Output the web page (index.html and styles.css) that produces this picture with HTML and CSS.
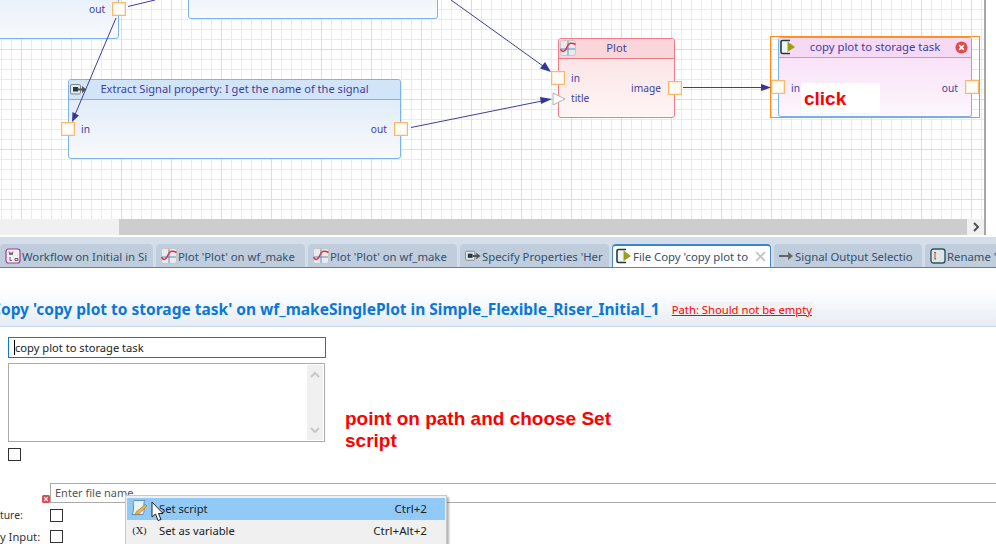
FILE: index.html
```html
<!DOCTYPE html>
<html lang="en">
<head>
<meta charset="utf-8">
<title>File Copy task</title>
<link rel="stylesheet" href="styles.css">
</head>
<body>
<svg class="defs" width="0" height="0" aria-hidden="true">
  <symbol id="i-plot" viewBox="0 0 16 16">
    <rect x="0.500" y="0.500" width="15" height="15" rx="2" fill="#e8ebee" stroke="#c3c7ca"/>
    <path d="M8 1V15M1 9H15" stroke="#5a8fc0" stroke-width="1"/>
    <path d="M0.500 9C3 13.500 5.500 11 7 7C8.500 3 11.500 2 15.500 4.500" fill="none" stroke="#e0303c" stroke-width="1.500"/>
  </symbol>
  <symbol id="i-copy" viewBox="0 0 16 16">
    <path d="M10 1.500H2.500A1.500 1.500 0 0 0 1 3V13A1.500 1.500 0 0 0 2.500 14.500H10" fill="#f4f6f4" stroke="#1f3f42" stroke-width="1.600"/>
    <path d="M7.500 2.500L15 8L7.500 13Z" fill="#9aa016"/>
  </symbol>
  <symbol id="i-extract" viewBox="0 0 17 13">
    <rect x="0.500" y="1.500" width="10" height="9.500" rx="1.500" fill="#e6e8ea" stroke="#7c8588"/>
    <rect x="3" y="4" width="5" height="4.500" fill="#1f3d45"/>
    <path d="M8 5.500H12V3L16.500 6.500L12 10V7.500H8Z" fill="#555"/>
  </symbol>
  <symbol id="i-err" viewBox="0 0 14 14">
    <circle cx="7" cy="7" r="6.500" fill="#e04a4a"/>
    <path d="M4.500 4.500L9.500 9.500M9.500 4.500L4.500 9.500" stroke="#fff" stroke-width="1.800"/>
  </symbol>
</svg>

<main class="app">
  <section class="diagram">
    <div class="canvas">
      <div class="node node-blue node-a"></div>
      <div class="node node-blue node-b"></div>

      <div class="node node-blue node-extract">
        <div class="node-head"><svg class="node-icon extract-icon"><use href="#i-extract"/></svg><span class="node-title">Extract Signal property: I get the name of the signal</span></div>
        <div class="node-body"><span class="plabel extract-in">in</span><span class="plabel extract-out">out</span></div>
      </div>

      <div class="node node-red node-plot">
        <div class="node-head"><svg class="node-icon plot-icon"><use href="#i-plot"/></svg><span class="node-title">Plot</span></div>
        <div class="node-body"><span class="plabel plot-in">in</span><span class="plabel plot-title">title</span><span class="plabel plot-image">image</span></div>
      </div>

      <div class="selection"></div>
      <div class="node node-pink node-copy">
        <div class="node-head"><svg class="node-icon copy-icon"><use href="#i-copy"/></svg><span class="node-title copy-title">copy plot to storage task</span><svg class="node-err"><use href="#i-err"/></svg></div>
        <div class="node-body"><span class="plabel copy-in">in</span><span class="plabel copy-out">out</span><span class="click-note">click</span></div>
      </div>

      <span class="plabel top-out">out</span>
      <span class="port p-top"></span>
      <span class="port p-ein"></span>
      <span class="port p-eout"></span>
      <span class="port p-pin"></span>
      <svg class="tri" viewBox="0 0 14 14"><path d="M1 1L13 7L1 13Z" fill="#fdfdfb" stroke="#b0b0b0"/></svg>
      <span class="port p-pimg"></span>
      <span class="port p-cin"></span>
      <span class="port p-cout"></span>

      <svg class="wires" width="986" height="219" viewBox="0 0 986 219">
        <g stroke="#3d3d9c" stroke-width="1" fill="none">
          <path d="M128 6.500L155 0"/>
          <path d="M116 18L74 117"/>
          <path d="M451 0L543 66"/>
          <path d="M411 127.500L542 101"/>
          <path d="M683 87.500H762"/>
        </g>
        <g fill="#35359a">
          <path d="M72 122L72.500 112L79 115.500Z"/>
          <path d="M551 72L540 68.500L545 62Z"/>
          <path d="M552 99L541 104L540 97Z"/>
          <path d="M771 87.500L761 84V91Z"/>
        </g>
      </svg>
    </div>
    <div class="hscroll">
      <div class="hscroll-gap"></div>
      <div class="hscroll-thumb"></div>
      <div class="hscroll-btn"><svg width="8" height="10" viewBox="0 0 8 10"><path d="M2 1L6 5L2 9" fill="none" stroke="#505050" stroke-width="2"/></svg></div>
    </div>
  </section>

  <nav class="tabbar">
    <div class="tab tab-1"><svg class="tab-icon" viewBox="0 0 16 16"><rect x="1" y="1" width="14" height="14" rx="2.500" fill="#f6eef6" stroke="#a03c96" stroke-width="1.200"/><path d="M4 3.500L5 7L6 4.500L7 7L8 3.500M5 9V12.500H7M10 10.500H13V12.500H10Z" fill="none" stroke="#555" stroke-width=".9"/></svg><span>Workflow on Initial in Si</span></div>
    <div class="tab tab-2"><svg class="tab-icon"><use href="#i-plot"/></svg><span>Plot 'Plot' on wf_make</span></div>
    <div class="tab tab-3"><svg class="tab-icon"><use href="#i-plot"/></svg><span>Plot 'Plot' on wf_make</span></div>
    <div class="tab tab-4"><svg class="tab-icon" viewBox="0 0 17 13"><use href="#i-extract"/></svg><span>Specify Properties 'Her</span></div>
    <div class="tab tab-active"><svg class="tab-icon"><use href="#i-copy"/></svg><span>File Copy 'copy plot to</span><svg class="tab-close" viewBox="0 0 10 10"><path d="M1 1L9 9M9 1L1 9" stroke="#c4c8cc" stroke-width="1.800"/></svg></div>
    <div class="tab tab-6"><svg class="tab-icon" viewBox="0 0 16 16"><path d="M1 7H10V4L15 8L10 12V9H1Z" fill="#666"/></svg><span>Signal Output Selectio</span></div>
    <div class="tab tab-7"><svg class="tab-icon" viewBox="0 0 16 16"><rect x="1" y="1" width="14" height="14" rx="2.500" fill="#dfe6e8" stroke="#2f5560" stroke-width="1.400"/><path d="M4 4.500H6M5 4.500V11M4 11H6" stroke="#b0502c" stroke-width="1"/></svg><span>Rename '</span></div>
  </nav>

  <header class="editor-head">
    <h1 class="editor-title">Copy 'copy plot to storage task' on wf_makeSinglePlot in Simple_Flexible_Riser_Initial_1</h1>
    <a class="editor-error">Path: Should not be empty</a>
  </header>

  <section class="form">
    <div class="name-field"><span class="caret"></span>copy plot to storage task</div>
    <div class="desc-field">
      <div class="vscroll">
        <svg width="10" height="8" viewBox="0 0 10 8"><path d="M1 6L5 2L9 6" fill="none" stroke="#c8c8c8" stroke-width="2"/></svg>
        <svg width="10" height="8" viewBox="0 0 10 8"><path d="M1 2L5 6L9 2" fill="none" stroke="#c8c8c8" stroke-width="2"/></svg>
      </div>
    </div>
    <span class="check check-first"></span>
    <div class="path-row">
      <svg class="path-err" viewBox="0 0 8 8"><rect width="8" height="8" rx="1.500" fill="#dd4a5a"/><path d="M2.200 2.200L5.800 5.800M5.800 2.200L2.200 5.800" stroke="#fff" stroke-width="1.200"/></svg>
      <div class="path-input">Enter file name</div>
    </div>
    <div class="opt-row opt-first"><span class="opt-label">ture:</span><span class="check"></span></div>
    <div class="opt-row"><span class="opt-label">y Input:</span><span class="check"></span></div>
  </section>

  <p class="annotation">point on path and choose Set script</p>

  <div class="menu">
    <div class="menu-item menu-hot">
      <span class="menu-icon"><svg width="18" height="18" viewBox="0 0 18 18"><path d="M4 1.500H15C13.500 3 14 5 14 8C14 11 14.500 13 13 15.500H2C3.500 13 3.500 11 3.500 8C3.500 5 2.500 3 4 1.500Z" fill="#e8f2fb" stroke="#5d8fbf"/><path d="M6 13L15.500 5.500L17 7L8.500 15L5.500 16Z" fill="#f2b83c" stroke="#a9771f" stroke-width=".7"/></svg></span>
      <span class="menu-text">Set script</span><span class="menu-key">Ctrl+2</span>
    </div>
    <div class="menu-item">
      <span class="menu-icon menu-var">(X)</span>
      <span class="menu-text">Set as variable</span><span class="menu-key">Ctrl+Alt+2</span>
    </div>
  </div>

  <svg class="pointer" width="14" height="21" viewBox="0 0 14 21"><path d="M1 1V16L4.500 13L7 19.500L10 18.500L7.500 12.500H12Z" fill="#fff" stroke="#222" stroke-width="1"/></svg>
</main>
</body>
</html>
```

FILE: styles.css
```css
* { box-sizing: border-box; }
html, body { margin: 0; padding: 0; background: #fff; }
body { width: 996px; height: 544px; overflow: hidden; font-family: "Noto Sans", "Open Sans", sans-serif; font-size: 11.300px; color: #333; }
.defs { position: absolute; }
.app { position: relative; width: 996px; height: 544px; overflow: hidden; display: flex; flex-direction: column; }

/* diagram */
.diagram { width: 986px; height: 235px; border-right: 2px solid #a6a6a6; flex: none; }
.canvas {
  position: relative; height: 219px; overflow: hidden; background-color: #fff;
  background-image:
    linear-gradient(to right, #d3dfee 1px, transparent 1px),
    linear-gradient(to bottom, #d3dfee 1px, transparent 1px),
    linear-gradient(to right, #e6ecf4 1px, transparent 1px),
    linear-gradient(to bottom, #e6ecf4 1px, transparent 1px);
  background-size: 50px 50px, 50px 50px, 10px 10px, 10px 10px;
  background-position: 21px 0, 0 49px, 1px 0, 0 9px;
}
.node { position: absolute; border: 1px solid #7ab4ea; border-radius: 3px; display: flex; flex-direction: column; color: #3e3e9e; }
.node-head { position: relative; height: 20px; flex: none; display: flex; align-items: center; justify-content: center; padding-bottom: 2px; border-bottom: 1px solid #7ab4ea; border-radius: 2px 2px 0 0; }
.node-body { position: relative; flex: 1; }
.node-title { font-size: 11.100px; line-height: 18px; }
.copy-title { font-size: 11.300px; }
.node-icon { position: absolute; left: 1px; top: 1px; width: 16px; height: 16px; }
.node-blue .node-head { background: #d2e5f8; }
.node-blue { background: linear-gradient(#dae8f8, #f8fafc); }
.node-red { border-color: #f47c8a; background: linear-gradient(#fbdfe2, #fdf6f4); }
.node-red .node-head { background: #f9d6d9; border-color: #f47c8a; }
.node-pink { background: linear-gradient(#f8dcf6, #fdf6fd); }
.node-pink .node-head { background: #f5d9f5; }
.node-a { left: -100px; top: -40px; width: 219px; height: 79px; }
.node-b { left: 188px; top: -60px; width: 250px; height: 79px; }
.node-extract { left: 68px; top: 79px; width: 333px; height: 80px; }
.extract-icon { width: 17px; height: 13px; top: 3px; }
.node-plot { left: 558px; top: 38px; width: 117px; height: 80px; }
.node-copy { left: 778px; top: 37px; width: 194px; height: 80px; }
.node-err { position: absolute; right: 3px; top: 3px; width: 13px; height: 13px; }
.selection { position: absolute; left: 770px; top: 36px; width: 210px; height: 82px; border: 1px solid #ff8c1a; }
.plabel { position: absolute; font-size: 10.200px; line-height: 14px; color: #3e3e9e; }
.extract-in { left: 12px; top: 22px; }
.extract-out { right: 13px; top: 22px; }
.plot-in { left: 12px; top: 12px; }
.plot-title { left: 12px; top: 32px; }
.plot-image { right: 13px; top: 22px; }
.copy-in { left: 12px; top: 23px; }
.copy-out { right: 13px; top: 23px; }
.top-out { left: 89px; top: 2px; }
.click-note { position: absolute; left: 22px; top: 25px; width: 79px; height: 30px; padding: 1px 0 0 3px; background: #fff; color: #f00; font: bold 19px/30px "Liberation Sans", Arial, sans-serif; }
.port { position: absolute; width: 14px; height: 14px; background: #fffdf6; border: 1px solid #fdb766; box-shadow: inset 0 0 0 1px rgba(253, 183, 102, .25); }
.p-top { left: 112px; top: 2px; }
.p-ein { left: 61px; top: 122px; }
.p-eout { left: 394px; top: 122px; }
.p-pin { left: 551px; top: 71px; }
.p-pimg { left: 668px; top: 81px; }
.p-cin { left: 771px; top: 80px; }
.p-cout { left: 965px; top: 80px; }
.tri { position: absolute; left: 552px; top: 92px; width: 14px; height: 14px; }
.wires { position: absolute; left: 0; top: 0; pointer-events: none; }

.hscroll { display: flex; height: 16px; background: #f0f0f0; }
.hscroll-gap { width: 119px; flex: none; }
.hscroll-thumb { flex: 1; background: #cdcdcd; }
.hscroll-btn { width: 17px; flex: none; display: flex; align-items: center; justify-content: center; }

/* tabs */
.tabbar { flex: none; margin-top: 2px; height: 31px; padding-top: 7px; background: #d3deea; border-bottom: 1px solid #4a86c0; display: flex; gap: 3px; overflow: hidden; }
.tab { flex: none; height: 23px; display: flex; align-items: center; padding: 1px 0 0 5px; background: #bfcddc; border-radius: 4px 4px 0 0; color: #35506f; font-size: 11.350px; white-space: nowrap; overflow: hidden; }
.tab-icon { width: 16px; height: 16px; margin-right: 1px; flex: none; }
.tab-1 { width: 153px; }
.tab-2, .tab-3, .tab-4 { width: 149px; }
.tab-active { width: 159px; height: 24px; background: #fff; border: 1px solid #4a86c0; border-top: 2px solid #3a86cc; border-bottom: 0; padding: 0 0 2px 3px; }
.tab-close { width: 11px; height: 11px; margin-left: 7px; flex: none; }
.tab-6 { width: 148px; padding-left: 4px; }
.tab-7 { width: 80px; }

/* header */
.editor-head { flex: none; height: 59px; padding: 22px 0 0 0; border-bottom: 1px solid #c8d8ea; background: linear-gradient(#fff 0, #fff 22px, #e6ecf5 100%); display: flex; align-items: center; }
.editor-title { margin: 2px 0 0 -9px; font-size: 15.500px; font-weight: 700; color: #0a78d7; white-space: nowrap; }
.editor-error { margin: 3px 0 0 11px; padding: 0 1px; font-size: 11.250px; color: #f00; background: #f2f2f2; text-decoration: underline; white-space: nowrap; }

/* form */
.form { flex: 1; position: relative; padding: 10px 0 0 8px; }
.name-field { width: 318px; height: 21px; border: 1px solid #0a78d7; padding-left: 6px; font-size: 11.150px; line-height: 19px; color: #222; position: relative; }
.caret { position: absolute; left: 5px; top: 2px; width: 1px; height: 15px; background: #000; }
.desc-field { width: 317px; height: 79px; margin-top: 5px; border: 1px solid #ababab; padding: 1px 1px 1px 0; display: flex; justify-content: flex-end; }
.vscroll { width: 16px; background: #f0f0f0; display: flex; flex-direction: column; justify-content: space-between; align-items: center; padding: 6px 0; }
.check { display: block; width: 13px; height: 13px; border: 1px solid #333; background: #fff; flex: none; }
.check-first { margin-top: 6px; }
.path-row { display: flex; align-items: flex-end; margin: 22px 0 0 34px; }
.path-err { width: 8px; height: 8px; flex: none; }
.path-input { flex: 1; height: 20px; border: 1px solid #ababab; border-right: 0; padding-left: 4px; font-size: 11px; line-height: 18px; color: #555; }
.opt-row { display: flex; align-items: center; margin-left: -8px; height: 13px; padding-left: 50px; position: relative; }
.opt-first { margin-top: 6px; }
.opt-row + .opt-row { margin-top: 8px; }
.opt-label { position: absolute; left: 0; top: -1px; font-size: 11.200px; line-height: 16px; color: #333; }
.opt-first .opt-label { top: -2px; font-size: 10.300px; }

/* overlays */
.annotation { position: absolute; left: 345px; top: 408px; width: 290px; margin: 0; font: bold 19px/22px "Liberation Sans", Arial, sans-serif; color: #f00; }
.menu { position: absolute; left: 125px; top: 495px; width: 322px; padding: 2px 1px; background: #f0f0f0; border: 1px solid #c8c8c8; box-shadow: 2px 2px 2px rgba(0, 0, 0, .3); }
.menu-item { height: 22px; display: flex; align-items: center; padding-bottom: 2px; font-size: 11.200px; color: #222; }
.menu-hot { background: #91c9f7; }
.menu-icon { width: 32px; flex: none; padding-left: 3px; display: flex; align-items: center; }
.menu-var { font: 10px "DejaVu Serif", serif; padding-left: 5px; }
.menu-text { flex: 1; }
.menu-key { margin-right: 18px; font-size: 11.600px; }
.pointer { position: absolute; left: 151px; top: 501px; }
```
